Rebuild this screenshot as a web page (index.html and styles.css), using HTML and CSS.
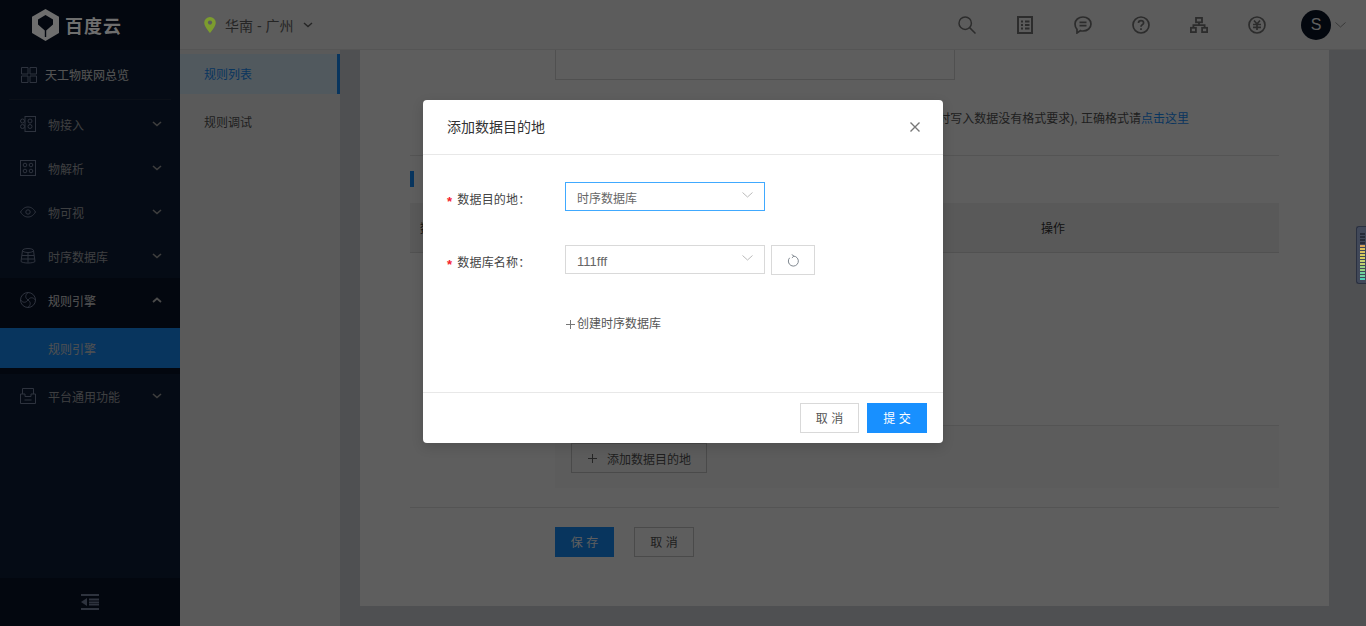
FILE: index.html
```html
<!DOCTYPE html>
<html lang="zh-CN">
<head>
<meta charset="utf-8">
<title>规则引擎</title>
<link rel="stylesheet" href="styles.css">
</head>
<body>
<div class="app">
  <aside class="sidebar">
    <div class="logo">
      <svg class="above" width="27" height="32" viewBox="0 0 27 32" fill="#6e6e6e" fill-rule="evenodd"><path d="M13.500 0 27 7.800V24L13.500 32 0 24V7.800ZM13.500 6 6 10.500V15.500L12.800 21.500V28H14.200V21.500L21 15.500V10.500Z"/></svg>
      <span class="logo-text above">百度云</span>
    </div>
    <a class="overview">
      <svg class="ico" width="16" height="16" viewBox="0 0 16 16" fill="none" stroke="#7d8aa8"><path d="M.5.5h6.500v6.500H.5zM9 .5h6.500v6.500H9zM.5 9h6.500v6.500H.5zM9 9h6.500v6.500H9z"/></svg>
      <span>天工物联网总览</span>
    </a>
    <nav class="menu">
      <a class="item"><svg class="ico" width="16" height="16" viewBox="0 0 16 16" fill="none" stroke="#7d8aa8"><rect x="5" y=".5" width="10.500" height="15"/><circle cx="2.500" cy="5" r="2"/><circle cx="2.500" cy="10.500" r="2"/><circle cx="10" cy="5" r="2"/><circle cx="10" cy="10.500" r="2"/></svg><span class="lbl">物接入</span><svg class="chev" width="10" height="6" viewBox="0 0 10 6" fill="none" stroke="#a8a8a8" stroke-width="1.600"><path d="M1 1l4 3.500L9 1"/></svg></a>
      <a class="item"><svg class="ico" width="16" height="16" viewBox="0 0 16 16" fill="none" stroke="#7d8aa8"><rect x=".5" y=".5" width="15" height="15"/><circle cx="5" cy="5" r="1.800"/><circle cx="11" cy="5" r="1.800"/><circle cx="5" cy="11" r="1.800"/><circle cx="11" cy="11" r="1.800"/></svg><span class="lbl">物解析</span><svg class="chev" width="10" height="6" viewBox="0 0 10 6" fill="none" stroke="#a8a8a8" stroke-width="1.600"><path d="M1 1l4 3.500L9 1"/></svg></a>
      <a class="item"><svg class="ico" width="16" height="16" viewBox="0 0 16 16" fill="none" stroke="#7d8aa8"><path d="M.5 8C3 4 5.500 3 8 3s5 1 7.500 5C13 12 10.500 13 8 13S3 12 .5 8Z"/><circle cx="8" cy="8" r="2.200"/></svg><span class="lbl">物可视</span><svg class="chev" width="10" height="6" viewBox="0 0 10 6" fill="none" stroke="#a8a8a8" stroke-width="1.600"><path d="M1 1l4 3.500L9 1"/></svg></a>
      <a class="item"><svg class="ico" width="16" height="16" viewBox="0 0 16 16" fill="none" stroke="#7d8aa8"><ellipse cx="8" cy="2.500" rx="5.500" ry="2"/><path d="M2.500 2.500 1 13.500C3 15.500 13 15.500 15 13.500L13.500 2.500M2 7.500h12M1.500 11h13M8 4.500v10"/></svg><span class="lbl">时序数据库</span><svg class="chev" width="10" height="6" viewBox="0 0 10 6" fill="none" stroke="#a8a8a8" stroke-width="1.600"><path d="M1 1l4 3.500L9 1"/></svg></a>
      <a class="item open"><svg class="ico" width="16" height="16" viewBox="0 0 16 16" fill="none" stroke="#7d8aa8"><circle cx="8" cy="8" r="7.500"/><path d="M8 .5C5 3 5 6 8 8M15.500 8C13 5 10 5 8 8M8 15.500C11 13 11 10 8 8M.5 8C3 11 6 11 8 8"/></svg><span class="lbl">规则引擎</span><svg class="chev" width="10" height="6" viewBox="0 0 10 6" fill="none" stroke="#c8c8c8" stroke-width="1.800"><path d="M1 5l4-3.500L9 5"/></svg></a>
      <a class="subitem">规则引擎</a>
      <a class="item"><svg class="ico" width="16" height="16" viewBox="0 0 16 16" fill="none" stroke="#7d8aa8"><path d="M2.500 6V.5h11V6M.5 6h4.500v2.500h6V6h4.500v9.500H.5ZM4.500 12h7"/></svg><span class="lbl">平台通用功能</span><svg class="chev" width="10" height="6" viewBox="0 0 10 6" fill="none" stroke="#a8a8a8" stroke-width="1.600"><path d="M1 1l4 3.500L9 1"/></svg></a>
    </nav>
    <div class="collapse">
      <svg width="18" height="16" viewBox="0 0 18 16" fill="#7d8aa8"><rect width="18" height="2"/><rect y="14" width="18" height="2"/><rect x="8" y="4.500" width="10" height="2"/><rect x="8" y="7.500" width="10" height="2"/><rect x="8" y="10" width="10" height="1.500"/><path d="M6 4v8L0 8Z"/></svg>
    </div>
  </aside>
  <div class="main">
    <header class="topbar">
      <div class="region">
        <svg class="above" width="12" height="16" viewBox="0 0 13 18"><path fill="#7c9c2e" d="M6.500 0A6.500 6.500 0 0 1 13 6.500C13 11 6.500 18 6.500 18S0 11 0 6.500A6.500 6.500 0 0 1 6.500 0Z"/><circle cx="6.500" cy="6.300" r="2.400" fill="#5c5c5c"/></svg>
        <span class="region-name">华南 - 广州</span>
        <svg width="10" height="6" viewBox="0 0 10 6" fill="none" stroke="#666" stroke-width="1.500"><path d="M1 1l4 3.500L9 1"/></svg>
      </div>
      <div class="tools">
        <svg width="18" height="18" viewBox="0 0 18 18" fill="none" stroke="#777" stroke-width="1.500"><circle cx="7.200" cy="7.200" r="6.200"/><path d="M11.600 11.600 17.500 17.500"/></svg>
        <svg width="18" height="18" viewBox="0 0 18 18" fill="none" stroke="#777" stroke-width="2"><rect x="2" y="1" width="14" height="16"/><path d="M5 5.500h2M9 5.500h4.500M5 9h2M9 9h4.500M5 12.500h2M9 12.500h4.500"/></svg>
        <svg width="18" height="18" viewBox="0 0 18 18" fill="none" stroke="#777" stroke-width="1.700"><path d="M9 1c4.500 0 8 3 8 7s-3.500 7-8 7c-1 0-2 0-2.500-.4L3 17v-3.700C1.700 12 1 10 1 8c0-4 3.500-7 8-7Z"/><path d="M5.500 6.300h7M5.500 9.700h7"/></svg>
        <svg width="18" height="18" viewBox="0 0 18 18" fill="none" stroke="#777" stroke-width="1.700"><circle cx="9" cy="9" r="8"/><path d="M6.500 7C6.500 5.300 7.800 4.600 9 4.600c1.400 0 2.600.9 2.600 2.300C11.600 8.600 9 8.800 9 10.800"/><path d="M9 12.300v1.600"/></svg>
        <svg width="18" height="16" viewBox="0 0 18 16" fill="none" stroke="#777" stroke-width="1.800"><rect x="6" y=".9" width="6" height="4.400"/><rect x=".9" y="10.800" width="5" height="4.300"/><rect x="12.100" y="10.800" width="5" height="4.300"/><path d="M9 5.300V8.200M3.400 10.800V8.200h11.200V10.800"/></svg>
        <svg width="18" height="18" viewBox="0 0 18 18" fill="none" stroke="#777" stroke-width="1.700"><circle cx="9" cy="9" r="8"/><path d="M6 4.500 9 8l3-3.500M5 8.500h8M5 11.300h8M9 8v6"/></svg>
        <div class="user"><span class="avatar">S</span><svg width="11" height="6" viewBox="0 0 11 6" fill="none" stroke="#999"><path d="M.5.5l5 4.500 5-4.500"/></svg></div>
      </div>
    </header>
    <div class="body">
      <aside class="subnav">
        <a class="subnav-item active">规则列表</a>
        <a class="subnav-item">规则调试</a>
      </aside>
      <section class="canvas">
        <div class="card">
          <div class="textarea"></div>
          <p class="hint">如果实时写入数据没有格式要求), 正确格式请<a class="link">点击这里</a></p>
          <div class="rule"></div>
          <div class="section-head"><i class="mark"></i></div>
          <div class="thead"><span class="th-name">数据目的地</span><span class="th-op">操作</span></div>
          <div class="dest">
            <button class="ghost-btn"><svg width="9" height="9" viewBox="0 0 9 9" fill="none" stroke="#666"><path d="M4.500 0v9M0 4.500h9"/></svg>添加数据目的地</button>
          </div>
          <div class="rule rule-foot"></div>
          <div class="actions">
            <button class="btn-save">保 存</button>
            <button class="btn-cancel">取 消</button>
          </div>
        </div>
      </section>
    </div>
  </div>
</div>
<div class="mask"></div>
<div class="handle"><div class="bars"><i class="b-d"></i><i class="b-d"></i><i class="b-d"></i><i class="b-d"></i><i class="b-1"></i><i class="b-2"></i><i class="b-2"></i><i class="b-3"></i><i class="b-3"></i><i class="b-4"></i><i class="b-4"></i><i class="b-5"></i><i class="b-5"></i><i class="b-6"></i><i class="b-6"></i><i class="b-7"></i></div></div>
<div class="modal">
  <div class="modal-head">
    <span class="modal-title">添加数据目的地</span>
    <svg width="10" height="10" viewBox="0 0 10 10" fill="none" stroke="#777" stroke-width="1.400"><path d="M.5.5l9 9M9.500.5l-9 9"/></svg>
  </div>
  <div class="modal-body">
    <div class="field">
      <label class="flabel"><em>*</em>数据目的地：</label>
      <div class="select focus"><span>时序数据库</span><svg width="11" height="6" viewBox="0 0 11 6" fill="none" stroke="#bbb"><path d="M.5.500l5 4.500 5-4.500"/></svg></div>
    </div>
    <div class="field">
      <label class="flabel"><em>*</em>数据库名称：</label>
      <div class="select"><span class="latin">111fff</span><svg width="11" height="6" viewBox="0 0 11 6" fill="none" stroke="#bbb"><path d="M.5.500l5 4.500 5-4.500"/></svg></div>
      <button class="refresh"><svg width="12" height="13" viewBox="0 0 12 13" fill="none" stroke="#808890"><path d="M6.500 2.100A5 5 0 1 1 2.600 3.800"/><path d="M4.700.5 6.900 2.100 4.900 3.900"/></svg></button>
    </div>
    <a class="create"><svg width="9" height="9" viewBox="0 0 9 9" fill="none" stroke="#777"><path d="M4.500 0v9M0 4.500h9"/></svg>创建时序数据库</a>
  </div>
  <div class="modal-foot">
    <button class="m-cancel">取 消</button>
    <button class="m-ok">提 交</button>
  </div>
</div>
</body>
</html>
```

FILE: styles.css
```css
* { box-sizing: border-box; }
html, body { margin: 0; height: 626px; overflow: hidden; }
body { font-family: "Liberation Sans", "Noto Sans CJK SC", sans-serif; font-size: 12px; color: #333; position: relative; }
button { font-family: inherit; padding: 0; cursor: pointer; }
svg { display: block; flex: none; }
.above { position: relative; z-index: 2; }

.app { display: flex; height: 626px; }

.sidebar { width: 180px; flex: none; display: flex; flex-direction: column; background: #102039; color: #b4b8bf; }
.logo { height: 50px; background: #0a1329; display: flex; align-items: center; gap: 6px; padding-left: 32px; }
.logo-text { font-size: 18px; font-weight: 700; letter-spacing: 1px; color: #6e6e6e; white-space: nowrap; }
.overview { height: 50px; display: flex; align-items: center; gap: 8px; margin: 0 9px; padding-left: 12px; border-bottom: 1px solid #202c42; color: #e4e4e4; }
.menu { flex: 1; display: flex; flex-direction: column; padding-top: 2px; }
.item { height: 44px; flex: none; display: flex; align-items: center; padding: 0 18px 0 20px; color: #a7aab0; }
.item .lbl { margin-left: 12px; flex: 1; }
.item.open { height: 50px; padding-bottom: 6px; background: #0a1329; color: #e2e2e2; }
.subitem { height: 46px; flex: none; display: flex; align-items: center; padding-left: 48px; background: #1890ff; background-clip: padding-box; border-bottom: 6px solid #0a1329; color: #d9dadb; }
.collapse { height: 48px; background: #0a1329; display: flex; justify-content: center; align-items: center; }

.main { flex: 1; display: flex; flex-direction: column; min-width: 0; }
.topbar { height: 50px; flex: none; background: #fafafa; border-bottom: 1px solid #e6e6e6; display: flex; align-items: center; justify-content: space-between; padding: 0 20px 0 24px; }
.region { display: flex; align-items: center; gap: 9px; }
.region-name { font-size: 14px; color: #666; margin-right: 1px; }
.tools { display: flex; align-items: center; gap: 40px; }
.user { display: flex; align-items: center; gap: 4px; margin-left: -5px; }
.avatar { width: 30px; height: 30px; border-radius: 50%; background: #0a1428; color: #fff; font-size: 16px; font-weight: 300; display: flex; align-items: center; justify-content: center; }

.body { flex: 1; display: flex; min-height: 0; }
.subnav { width: 160px; flex: none; background: #f5f5f5; padding-top: 4px; }
.subnav-item { height: 40px; display: flex; align-items: center; padding: 0 0 2px 24px; color: #555; margin-bottom: 8px; }
.subnav-item.active { background: #dcf0ff; color: #1890ff; border-right: 3px solid #1890ff; }

.canvas { flex: 1; background: #d5d8dd; padding: 0 37px 20px 20px; min-width: 0; }
.card { height: 100%; background: #fff; padding: 0 50px; display: flex; flex-direction: column; overflow: hidden; }
.textarea { width: 400px; height: 30px; margin-left: 145px; border: 1px solid #d9d9d9; border-top: 0; flex: none; }
.hint { margin: 30px 0 0; height: 18px; line-height: 18px; text-align: right; padding-right: 90px; color: #555; white-space: nowrap; }
.link { color: #1890ff; }
.rule { height: 1px; background: #e4e4e4; flex: none; margin-top: 27px; }
.section-head { height: 16px; margin-top: 15px; flex: none; }
.mark { display: block; width: 4px; height: 16px; background: #1890ff; }
.thead { height: 50px; margin-top: 16px; background: #f2f2f2; flex: none; border-bottom: 1px solid #dcdcdc; display: flex; align-items: center; justify-content: space-between; padding: 0 214px 0 10px; }
.th-name { color: #333; }
.th-op { color: #333; }
.dest { margin-top: 172px; margin-left: 145px; height: 63px; background: #f8f8f8; border-top: 1px solid #e4e4e4; padding-left: 16px; flex: none; }
.ghost-btn { height: 30px; width: 136px; display: flex; align-items: center; gap: 10px; padding-left: 16px; margin-top: 17px; background: transparent; border: 1px solid #c8c8c8; color: #555; font-size: 12px; }
.rule-foot { margin-top: 19px; }
.actions { display: flex; gap: 20px; margin-top: 19px; margin-left: 145px; }
.btn-save { width: 59px; height: 30px; border: 0; padding-bottom: 2px; background: #1890ff; color: #fff; font-size: 12px; }
.btn-cancel { width: 60px; height: 30px; border: 1px solid #c8c8c8; padding-bottom: 2px; background: #fff; color: #555; font-size: 12px; }

.mask { position: absolute; inset: 0; background: rgba(0,0,0,.63); }

.handle { position: absolute; left: 1356px; top: 226px; width: 10px; height: 58px; background: #414859; border: 1px solid #2a3040; border-right: 0; border-radius: 3px 0 0 3px; padding: 6px 0 0 3px; }
.bars { display: flex; flex-direction: column; gap: 1px; }
.bars i { display: block; height: 2px; width: 5px; }
.b-d { background: #262b38; }
.b-1 { background: #d9a35a; }
.b-2 { background: #d9c060; }
.b-3 { background: #d6cc60; }
.b-4 { background: #c0d070; }
.b-5 { background: #96d080; }
.b-6 { background: #6fd0a0; }
.b-7 { background: #50d0b8; }

.modal { position: absolute; left: 423px; top: 100px; width: 520px; height: 343px; background: #fff; border-radius: 4px; display: flex; flex-direction: column; box-shadow: 0 4px 12px rgba(0,0,0,.15); }
.modal-head { height: 55px; flex: none; border-bottom: 1px solid #e8e8e8; display: flex; align-items: center; justify-content: space-between; padding: 0 23px 0 24px; font-size: 14px; color: #333; }
.modal-title { padding-bottom: 2px; }
.modal-body { flex: 1; padding: 27px 0 0 24px; }
.field { display: flex; align-items: center; height: 29px; margin-bottom: 34px; }
.flabel { width: 118px; flex: none; padding-top: 4px; color: #444; font-size: 12px; letter-spacing: .2px; }
.flabel em { color: #f5222d; font-style: normal; font-weight: 700; font-size: 13px; line-height: 1; vertical-align: -2px; margin-right: 5px; }
.select { width: 200px; height: 29px; border: 1px solid #d9d9d9; display: flex; align-items: flex-start; justify-content: space-between; padding: 0 11px; color: #666; line-height: 33px; }
.select svg { margin-top: 9px; }
.select.focus { border-color: #40a9ff; }
.latin { font-size: 13px; line-height: 31px; }
.refresh { width: 44px; height: 30px; margin-left: 6px; margin-top: 1px; background: #fff; border: 1px solid #d9d9d9; display: flex; align-items: center; justify-content: center; }
.create { display: flex; align-items: center; gap: 2px; margin: 41px 0 0 118px; color: #555; white-space: nowrap; line-height: 18px; padding-left: 1px; }
.modal-foot { height: 51px; flex: none; border-top: 1px solid #e8e8e8; display: flex; justify-content: flex-end; gap: 8px; padding: 10px 16px 0 0; }
.m-cancel { width: 59px; height: 30px; border: 1px solid #d9d9d9; padding-bottom: 2px; background: #fff; color: #555; font-size: 12px; }
.m-ok { width: 60px; height: 30px; border: 0; padding-bottom: 2px; background: #1890ff; color: #fff; font-size: 12px; }
```
